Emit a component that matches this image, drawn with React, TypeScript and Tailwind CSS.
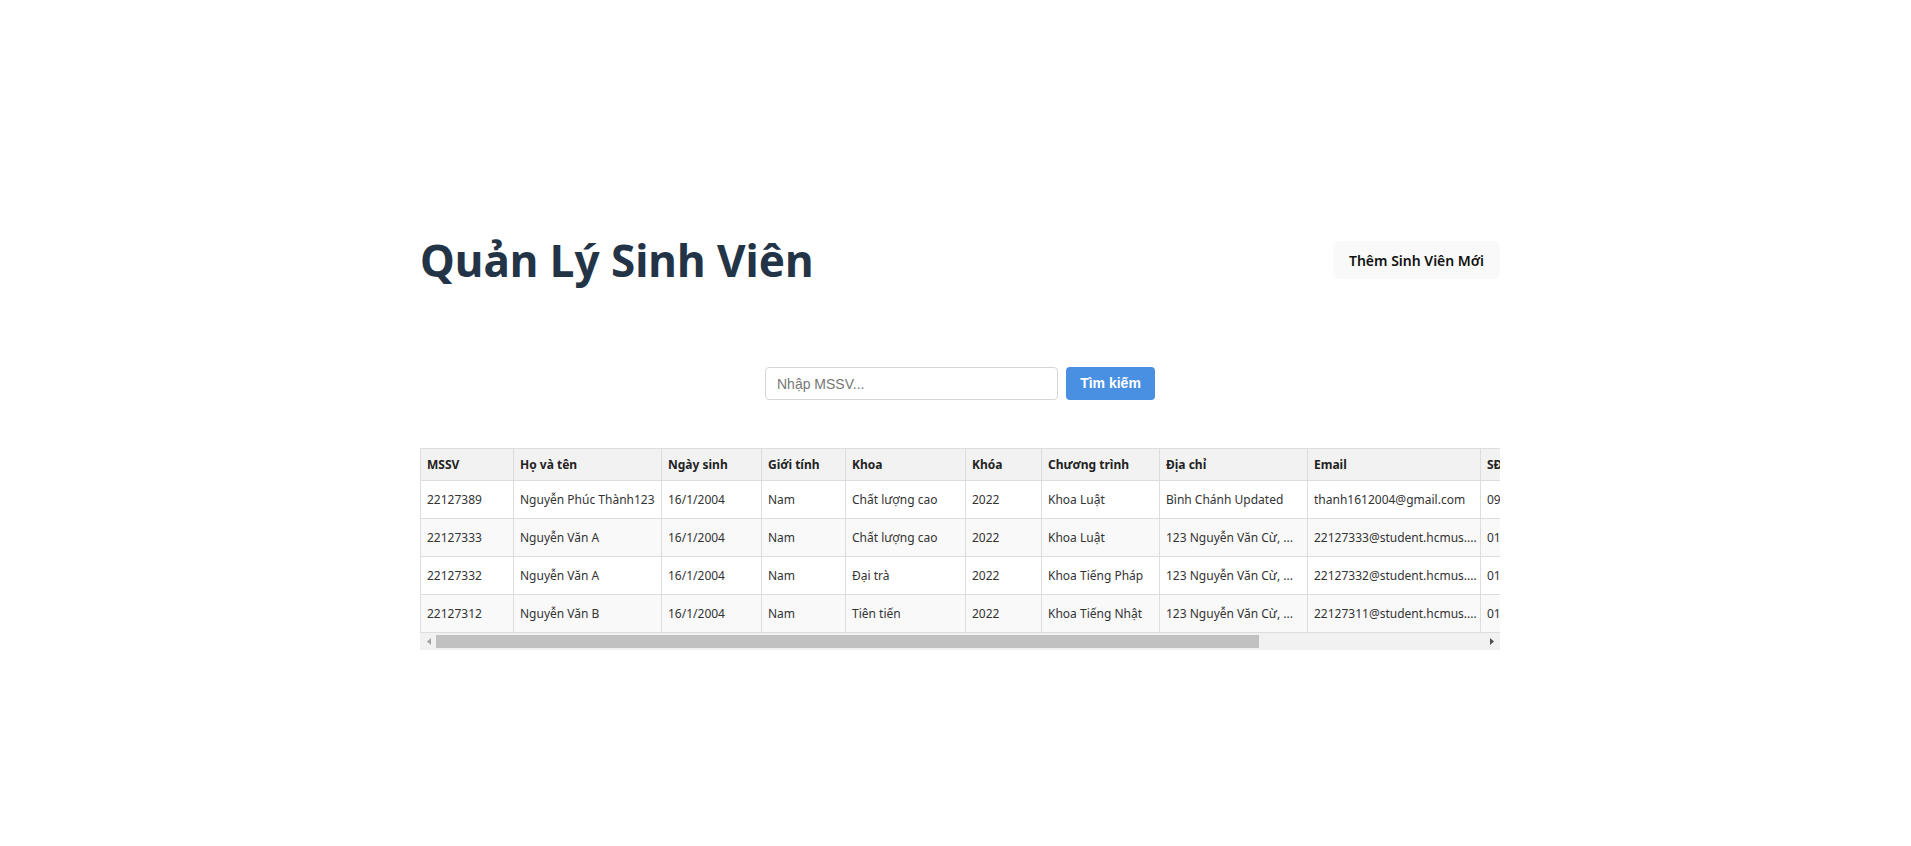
const students = [
  {
    mssv: '22127389',
    name: 'Nguyễn Phúc Thành123',
    dob: '16/1/2004',
    gender: 'Nam',
    khoa: 'Chất lượng cao',
    khoaHoc: '2022',
    program: 'Khoa Luật',
    address: 'Bình Chánh Updated',
    email: 'thanh1612004@gmail.com',
    phone: '0901234567',
  },
  {
    mssv: '22127333',
    name: 'Nguyễn Văn A',
    dob: '16/1/2004',
    gender: 'Nam',
    khoa: 'Chất lượng cao',
    khoaHoc: '2022',
    program: 'Khoa Luật',
    address: '123 Nguyễn Văn Cừ, ...',
    email: '22127333@student.hcmus....',
    phone: '0123456789',
  },
  {
    mssv: '22127332',
    name: 'Nguyễn Văn A',
    dob: '16/1/2004',
    gender: 'Nam',
    khoa: 'Đại trà',
    khoaHoc: '2022',
    program: 'Khoa Tiếng Pháp',
    address: '123 Nguyễn Văn Cừ, ...',
    email: '22127332@student.hcmus....',
    phone: '0123456789',
  },
  {
    mssv: '22127312',
    name: 'Nguyễn Văn B',
    dob: '16/1/2004',
    gender: 'Nam',
    khoa: 'Tiên tiến',
    khoaHoc: '2022',
    program: 'Khoa Tiếng Nhật',
    address: '123 Nguyễn Văn Cừ, ...',
    email: '22127311@student.hcmus....',
    phone: '0123456789',
  },
]

const columns = [
  { label: 'MSSV', key: 'mssv', w: 'w-[93px]' },
  { label: 'Họ và tên', key: 'name', w: 'w-[148px]' },
  { label: 'Ngày sinh', key: 'dob', w: 'w-[100px]' },
  { label: 'Giới tính', key: 'gender', w: 'w-[84px]' },
  { label: 'Khoa', key: 'khoa', w: 'w-[120px]' },
  { label: 'Khóa', key: 'khoaHoc', w: 'w-[76px]' },
  { label: 'Chương trình', key: 'program', w: 'w-[118px]' },
  { label: 'Địa chỉ', key: 'address', w: 'w-[148px]' },
  { label: 'Email', key: 'email', w: 'w-[173px]' },
  { label: 'SĐT', key: 'phone', w: 'w-[110px]' },
  { label: 'Trạng thái', key: 'status', w: 'w-[110px]' },
  { label: 'Hành động', key: 'action', w: 'w-[90px]' },
] as const

export default function App() {
  return (
    <div className="min-h-screen bg-white font-['Noto_Sans',sans-serif] text-[#333]">
      <div className="ml-[420px] w-[1080px] pt-[231px]">
        <div className="flex items-center justify-between">
          <h1 className="text-[44px] font-bold leading-[58px] text-[#233447]">Quản Lý Sinh Viên</h1>
          <button className="h-[38px] w-[167px] rounded-md bg-[#f9f9f9] text-[14px] font-semibold text-[#111]">
            Thêm Sinh Viên Mới
          </button>
        </div>

        <div className="mt-[78px] flex justify-center gap-2 font-['Liberation_Sans',Arial,sans-serif]">
          <input
            placeholder="Nhập MSSV..."
            className="h-[33px] w-[293px] rounded border border-[#d6d6d6] px-[11px] text-[14px] placeholder:text-[#777] outline-none"
          />
          <button className="h-[33px] w-[89px] rounded bg-[#4a90e2] text-[14px] font-bold text-white">Tìm kiếm</button>
        </div>

        <div className="mt-[48px] w-[1080px] overflow-hidden">
          <table className="w-[1370px] table-fixed border-collapse text-[12px]">
            <thead>
              <tr className="h-[32px] bg-[#f2f2f2]">
                {columns.map((c) => (
                  <th key={c.label} className={`${c.w} border border-[#ddd] px-[6px] text-left font-bold text-[#222] whitespace-nowrap overflow-hidden`}>
                    {c.label}
                  </th>
                ))}
              </tr>
            </thead>
            <tbody>
              {students.map((s, i) => (
                <tr key={s.mssv} className={i % 2 === 1 ? 'h-[38px] bg-[#f9f9f9]' : 'h-[38px] bg-white'}>
                  {columns.map((c) => (
                    <td key={c.label} className="border border-[#ddd] px-[6px] whitespace-nowrap overflow-hidden">
                      {c.key === 'status' ? 'Đang học' : c.key === 'action' ? 'Sửa' : s[c.key]}
                    </td>
                  ))}
                </tr>
              ))}
            </tbody>
          </table>
          <div className="flex h-[17px] items-center bg-[#f1f1f1]">
            <div className="flex w-[17px] justify-center">
              <svg width="4" height="7" viewBox="0 0 4 7"><path d="M4 0 L0 3.5 L4 7 Z" fill="#a3a3a3" /></svg>
            </div>
            <div className="flex-1 h-full py-[2px]">
              <div className="h-full w-[823px] ml-[-1px] bg-[#c1c1c1]" />
            </div>
            <div className="flex w-[17px] justify-center">
              <svg width="4" height="7" viewBox="0 0 4 7"><path d="M0 0 L4 3.5 L0 7 Z" fill="#505050" /></svg>
            </div>
          </div>
        </div>
      </div>
    </div>
  )
}
